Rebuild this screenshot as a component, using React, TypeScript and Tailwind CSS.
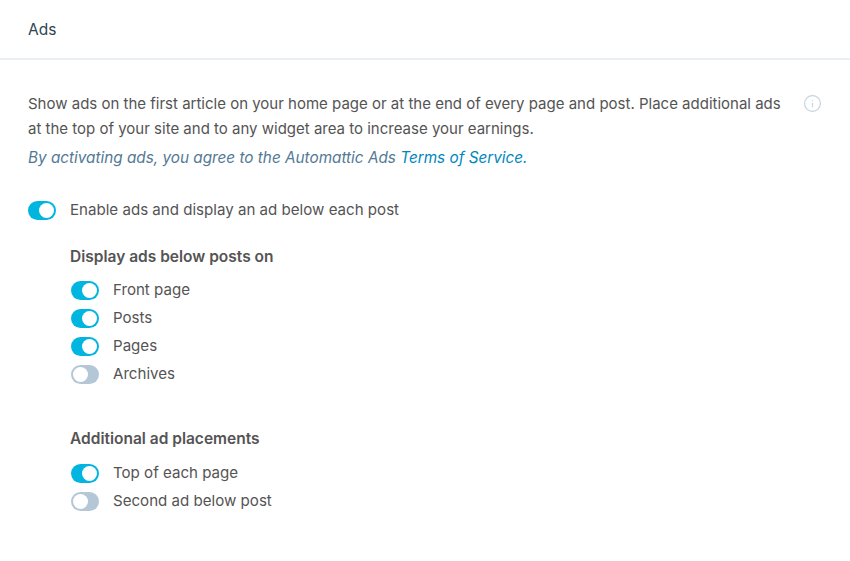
import { Info } from "lucide-react";

function Toggle({ on }: { on: boolean }) {
  return (
    <span
      className={
        on
          ? "flex h-[19px] w-7 shrink-0 items-center justify-end rounded-full bg-[#00b5e0] px-[2px]"
          : "flex h-[19px] w-7 shrink-0 items-center justify-start rounded-full bg-[#b4c7d6] px-[2px]"
      }
    >
      <span className="h-[15px] w-[15px] rounded-full bg-white" />
    </span>
  );
}

function Row({ label, on }: { label: string; on: boolean }) {
  return (
    <div className="flex h-7 items-center gap-[14px]">
      <Toggle on={on} />
      <span>{label}</span>
    </div>
  );
}

export default function App() {
  return (
    <div className="h-[561px] w-[850px] overflow-hidden bg-white font-['Inter','Noto_Sans',sans-serif] text-[15.1px] text-[#545454]">
      <div className="flex h-[60px] items-center border-b-2 border-[#e9eff3] px-7 pt-[2px] text-[15.5px] text-[#2e4453]">Ads</div>
      <div className="px-7 pt-[31px]">
        <div className="flex justify-between">
          <p className="w-[760px] text-[15px] leading-[25px]">
            Show ads on the first article on your home page or at the end of every page and post. Place additional ads at the top of your site and to any widget area to increase your earnings.
          </p>
          <Info className="mt-[3px] h-[19px] w-[19px] text-[#c3d4e2]" strokeWidth={1.5} />
        </div>
        <p className="mt-[5px] text-[15.3px] italic leading-[24px] text-[#537994]">
          By activating ads, you agree to the Automattic Ads <span className="text-[#0087be]">Terms of Service.</span>
        </p>
        <div className="mt-[26px] flex h-7 items-center gap-[14px]">
          <Toggle on />
          <span>Enable ads and display an ad below each post</span>
        </div>
        <div className="ml-[43px]">
          <h3 className="-ml-px mb-[7px] mt-[21px] text-[15.5px] font-semibold leading-6">Display ads below posts on</h3>
          <Row label="Front page" on />
          <Row label="Posts" on />
          <Row label="Pages" on />
          <Row label="Archives" on={false} />
          <h3 className="-ml-px mb-[8px] mt-[39px] text-[15.5px] font-semibold leading-6">Additional ad placements</h3>
          <Row label="Top of each page" on />
          <Row label="Second ad below post" on={false} />
        </div>
      </div>
    </div>
  );
}
